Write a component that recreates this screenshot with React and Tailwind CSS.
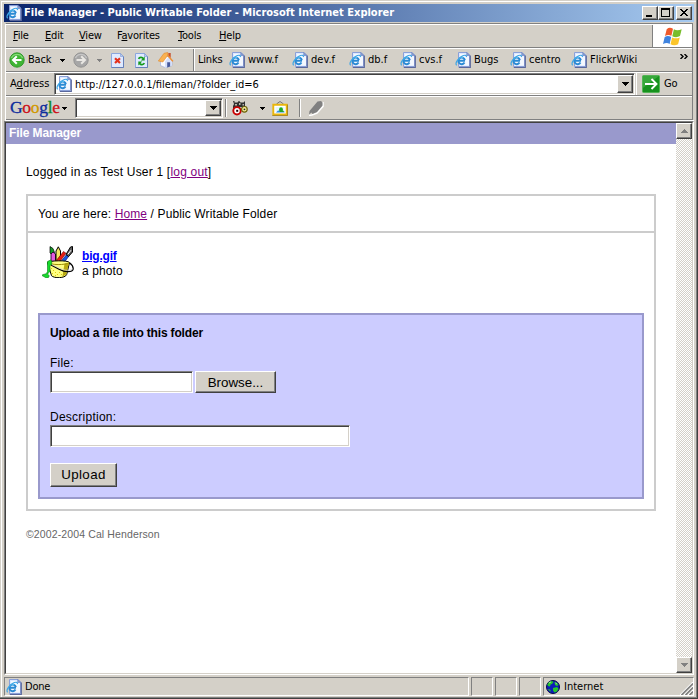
import React from "react";

const UI = "font-['DejaVu_Sans_Condensed','DejaVu_Sans',sans-serif] text-[11px] leading-[14px] whitespace-nowrap";
const TIGHT = "tracking-[-0.2px]";
const RAISED = "bg-[#d4d0c8] border border-t-white border-l-white border-r-[#404040] border-b-[#404040] shadow-[inset_-1px_-1px_0_#808080]";
const SUNKEN = "bg-white border border-t-[#808080] border-l-[#808080] border-r-white border-b-white shadow-[inset_1px_1px_0_#404040,inset_-1px_-1px_0_#d4d0c8]";

function IePage({ className = "" }) {
  return (
    <svg width="16" height="16" viewBox="0 0 16 16" className={`shrink-0 ${className}`}>
      <path d="M3.500 .5h8.500l2.500 2.500v11.500h-11z" fill="#dce8ff" stroke="#8ba0d8" />
      <path d="M5 2h6v2.500h3v9H5z" fill="#f4f8ff" />
      <path d="M15.300 3.500v12h-11.500" fill="none" stroke="#5a689c" strokeWidth="1.200" />
      <path d="M11.800 .5v2.900h2.900z" fill="#8aa4e0" stroke="#6a7fb8" strokeWidth=".7" />
      <path d="M10 8.800H3.400M9.500 10.600A3.300 3.300 0 1 1 9.900 8.300" fill="none" stroke="#2a8ad4" strokeWidth="1.900" />
      <path d="M3.600 7.200a3.400 3.400 0 0 1 4.600-1.700" fill="none" stroke="#5cc0ee" strokeWidth="1.200" />
      <path d="M1.800 13.200C-.4 12.200 2.200 7 6.500 4.400C9.800 2.500 12.200 3.100 11.200 5.100" fill="none" stroke="#3fa6e6" strokeWidth="1.200" />
    </svg>
  );
}

function Caret({ color = "#000", className = "" }) {
  return (
    <svg width="7" height="4" viewBox="0 0 7 4" shapeRendering="crispEdges" className={`shrink-0 ${className}`}>
      <path d="M0 0h7v1H0zM1 1h5v1H1zM2 2h3v1H2zM3 3h1v1H3z" fill={color} />
    </svg>
  );
}

function SmallCaret({ color = "#000", className = "" }) {
  return (
    <svg width="5" height="3" viewBox="0 0 5 3" shapeRendering="crispEdges" className={`shrink-0 ${className}`}>
      <path d="M0 0h5v1H0zM1 1h3v1H1zM2 2h1v1H2z" fill={color} />
    </svg>
  );
}

function RoundArrow({ forward }) {
  return (
    <svg width="16" height="16" viewBox="0 0 16 16" className="shrink-0">
      <circle cx="8" cy="8" r="7.200" fill={forward ? "#a6a6a6" : "#3fb534"} stroke={forward ? "#8f8f8f" : "#2a9425"} strokeWidth=".9" />
      <path d="M2.500 6a6 6 0 0 1 11 0" fill="none" stroke={forward ? "#c6c6c6" : "#88da78"} strokeWidth="1.300" />
      <path d={forward ? "M3.500 8h8M8.200 4.200L12 8l-3.800 3.800" : "M12.500 8h-8M7.800 4.200L4 8l3.800 3.800"} fill="none" stroke={forward ? "#e9e7e3" : "#fff"} strokeWidth="2" />
    </svg>
  );
}

function PageIcon({ kind }) {
  return (
    <svg width="13" height="15" viewBox="0 0 13 15" className="shrink-0">
      <path d="M.5.5h9l3 3v11H.5z" fill="#dfeaff" stroke="#8ba6dc" />
      <path d="M12.500 3.500v11H.5" fill="none" stroke="#6680b8" />
      <path d="M9.500.5v3h3z" fill="#b7cbf2" stroke="#8199cc" strokeWidth=".6" />
      {kind === "stop" ? (
        <path d="M4 5.200l5 4.800M9 5.200l-5 4.800" stroke="#e5301c" strokeWidth="2.200" />
      ) : (
        <g fill="none" stroke="#159a1c" strokeWidth="1.700">
          <path d="M3.600 5.800c.8-1.800 3.600-2 4.800-.2M9.400 10.200c-1 1.800-3.600 2-4.800.3" />
          <path d="M9.700 3.500v4.100H5.800zM3.300 12.500V8.400h3.900z" fill="#159a1c" stroke="none" />
        </g>
      )}
    </svg>
  );
}

function HomeIcon() {
  return (
    <svg width="16" height="16" viewBox="0 0 16 16" className="shrink-0">
      <path d="M10.300 1h2.400v5l-2.400-2z" fill="#c8502c" />
      <path d="M2.500 8.500L9 4l5 5v4.500l-6.500 2.200-5-2.200z" fill="#fbfcff" stroke="#9aa8d8" strokeWidth=".6" />
      <path d="M7 9.500L10.500 5l3.500 4v4.500L7 15.700z" fill="#d6e0fa" />
      <path d="M9.200 10.200h2.900v4.200l-2.900 1z" fill="#47599c" />
      <path d="M.3 9L6 1.300 9.800.5 10 3 4.800 10z" fill="#f9b251" stroke="#e28a2c" strokeWidth=".6" />
      <path d="M9.300 1.800l6.200 7.300-1.200.7-4.800-5.500z" fill="#ed8f32" />
    </svg>
  );
}

function WindowsFlag() {
  return (
    <svg width="19" height="19" viewBox="0 0 19 19">
      <path d="M3.700 2.200C5.800.4 7.800.5 10 1.800L8.400 8.800C6.500 7.600 4.300 7.600 2 8.900z" fill="#ef5a2b" />
      <path d="M10.900 2.300c2.300 1.400 4.800 1.400 7.800-.1L17 9.100c-2.400 1.400-5 1.500-7.700.2z" fill="#78bd2c" />
      <path d="M1.700 9.900c2.100-1.300 4.300-1.300 6.500 0L6.600 16.900C4.800 15.600 2.500 15.600 0 16.900z" fill="#3f83df" />
      <path d="M9.100 10.400c2.500 1.200 5.100 1.200 7.700 0l-1.700 6.900c-2.700 1.400-5.100 1.400-7.600 0z" fill="#fbc52b" />
    </svg>
  );
}

function Binoculars() {
  return (
    <svg width="16" height="16" viewBox="0 0 16 16" className="shrink-0">
      <path d="M1 1h1.500v1.500h3L7 .8l1.500 1.700h3L13 1v5l1 1H8L5 8 1 10V6l1-2z" fill="#303030" />
      <path d="M3 4h2v1.500H3zM7 3h1.500v2H7zM10.500 4h1.500v1.500h-1.500z" fill="#b8b8ac" />
      <circle cx="5" cy="10.800" r="3.700" fill="#fff" stroke="#c80000" strokeWidth="1.900" />
      <circle cx="12.400" cy="9.300" r="2.800" fill="#fff8a0" stroke="#6b6008" strokeWidth="1.200" />
      <path d="M4.200 9.800h2v2h-2z" fill="#200" />
      <path d="M11.600 8.600h1.700v1.600h-1.700z" fill="#222" />
    </svg>
  );
}

function PictureIcon() {
  return (
    <svg width="16" height="15" viewBox="0 0 16 15" className="shrink-0">
      <path d="M4.500 3L8 .5 11.500 3" fill="none" stroke="#686868" strokeWidth=".9" />
      <path d="M1.300 3.800h13.400v9.700H1.300z" fill="#fff" stroke="#e9b60c" strokeWidth="1.900" />
      <path d="M.3 14.600h15.300V3.500" fill="none" stroke="#8e6c00" strokeWidth=".7" />
      <path d="M3.500 6h9v5.500h-9z" fill="#e6f7ff" />
      <path d="M4 11.500l2-2 3 .5 3.500.5v1z" fill="#2f8fe2" />
      <circle cx="9" cy="8.200" r="1.900" fill="#1cae20" />
      <path d="M7 9.300h4l1 1.600H8z" fill="#23a426" />
    </svg>
  );
}

function Globe() {
  return (
    <svg width="14" height="14" viewBox="0 0 14 14" className="shrink-0">
      <circle cx="7" cy="7" r="6.500" fill="#0c1cb8" stroke="#050a45" />
      <path d="M1.300 4.500L3 2l3-1 1.500 1L6 4 4.500 4.500 4 6.500 2 6zM8.500 2l2.500.8L12.500 5 11 6 9 5zM7 8l4-1 1.500 1.500L11 11.500 8.500 12.500 7 10.500zM2 9l2 .5 1 2L3.500 11z" fill="#25c72c" />
      <path d="M3 3l2-1.200M9.500 3l1.300.8" stroke="#c3f5bd" strokeWidth=".8" />
    </svg>
  );
}

function PaintBucket() {
  return (
    <svg width="32" height="32" viewBox="0 0 32 32" className="shrink-0">
      <path d="M8 .5l3 2 1.500 4-2 3L8 7z" fill="#139a28" stroke="#000" strokeWidth=".7" />
      <path d="M9 8l2-2 2.500 2v8H9z" fill="#e45be0" stroke="#202" strokeWidth=".9" />
      <path d="M14 5L16.300.8 18.500 5v10H14z" fill="#f6e860" stroke="#000" strokeWidth="1" />
      <path d="M13.500 15.500L21.500 5.500l2.500 1.800L17.500 16z" fill="#e81c12" stroke="#600" strokeWidth=".6" />
      <path d="M18.500 16L25 8l2.200 1.700L22.500 16z" fill="#1558e0" stroke="#000060" strokeWidth=".6" />
      <path d="M24 8.500L28.500 1l2-.5v5.500L26.500 10.500z" fill="#606060" stroke="#000" strokeWidth="1" />
      <path d="M26 8.200l3-4" stroke="#fff" strokeWidth="1" />
      <path d="M5.500 16.500c2-2 20-2.500 22 0l-2.800 12c-1.500 4-13 4-15.200 1.200z" fill="#ffff80" stroke="#000" strokeWidth="1" />
      <path d="M22.500 17.500l4.500-.5-2.600 11.300-4 2.400z" fill="#b9aa12" />
      <path d="M9 22h1v1H9zM11 24h1v1h-1zM13 26h1v1h-1zM15 28h1v1h-1zM17 26h1v1h-1zM19 28h1v1h-1zM13 29h1v1h-1zM10 27h1v1h-1z" fill="#e0cc10" />
      <path d="M5.500 16.500c3 2.500 18 3 22 0" fill="none" stroke="#9b8c08" strokeWidth="1" />
      <path d="M9 19l8 4.200c6 3.300 13.500 3.400 14.200 0 .2-2.500-1.700-5-3.700-6.500" fill="none" stroke="#000" strokeWidth="1.200" />
      <path d="M10 18.700l8 3.700c5 2.200 10 2.800 12 .8" fill="none" stroke="#d0d0d0" strokeWidth=".8" />
      <path d="M5.500 15.500l3-1.500 1.200 1v3.500l-1.700 1v6l-1.800 1.500-.5 1.200 1.600 1.500-1 2H3.500L2 30.500.5 30v-1.300l3.800-1 1.200-2.200z" fill="#16dc2c" stroke="#087812" strokeWidth=".6" />
    </svg>
  );
}

function Menu({ k, rest, pre = "", width }) {
  return <span className={`${UI} ${TIGHT} ${width} shrink-0`}>{pre}<u className="underline underline-offset-1 decoration-1">{k}</u>{rest}</span>;
}

function LinkItem({ label, width }) {
  return (
    <div className={`flex items-center gap-[3px] shrink-0 ${width}`}>
      <IePage />
      <span className={UI}>{label}</span>
    </div>
  );
}

const LINKS = [
  ["www.f", "w-[63px]"],
  ["dev.f", "w-[57px]"],
  ["db.f", "w-[51px]"],
  ["cvs.f", "w-[55px]"],
  ["Bugs", "w-[55px]"],
  ["centro", "w-[61px]"],
  ["FlickrWiki", "w-[84px]"],
];

const BAND = "border-t border-t-white border-b border-b-[#808080] flex items-center h-6 shrink-0";

export default function App() {
  return (
    <div className="w-[698px] h-[699px] overflow-hidden bg-[#d4d0c8] text-black border-r border-b border-[#404040]">
      <div className="w-[697px] h-[698px] border-r border-b border-[#808080] pt-px pl-px">
        <div className="w-[695px] h-[696px] border-t border-l border-white pt-[2px] pl-[2px] flex flex-col">
          {/* title bar */}
          <div className="w-[690px] h-[18px] shrink-0 bg-linear-to-r/srgb from-[#0a246a] to-[#a6caf0] flex items-center pl-[2px] pr-[2px]">
            <IePage />
            <span className="ml-[2px] font-['DejaVu_Sans_Condensed','DejaVu_Sans',sans-serif] font-bold text-[11px] leading-[14px] whitespace-nowrap text-white">File Manager - Public Writable Folder - Microsoft Internet Explorer</span>
            <div className="ml-auto flex">
              <div className={`w-4 h-[14px] ${RAISED}`}>
                <div className="w-[6px] h-[2px] bg-black ml-[3px] mt-[8px]" />
              </div>
              <div className={`w-4 h-[14px] ${RAISED}`}>
                <div className="w-[9px] h-[9px] border border-t-2 border-black ml-[2px] mt-px" />
              </div>
              <div className={`w-4 h-[14px] ml-[2px] ${RAISED}`}>
                <svg width="8" height="7" viewBox="0 0 8 7" shapeRendering="crispEdges" className="ml-[3px] mt-[2px]">
                  <path d="M0 0h2v1h1v1h2v-1h1v-1h2v1h-1v1h-1v1h-1v1h1v1h1v1h1v1h-2v-1h-1v-1h-2v1h-1v1h-2v-1h1v-1h1v-1h1v-1h-1v-1h-1v-1h-1z" />
                </svg>
              </div>
            </div>
          </div>

          {/* toolbars */}
          <div className="w-[688px] ml-px mt-px border-t border-l border-t-[#808080] border-l-white border-r border-r-[#808080] flex flex-col shrink-0">
            <div className={BAND}>
              <Menu k="F" rest="ile" width="w-[32px] ml-[7px]" />
              <Menu k="E" rest="dit" width="w-[34px]" />
              <Menu k="V" rest="iew" width="w-[38px]" />
              <Menu pre="F" k="a" rest="vorites" width="w-[61px]" />
              <Menu k="T" rest="ools" width="w-[41px]" />
              <Menu k="H" rest="elp" width="w-[40px]" />
              <div className="ml-auto w-[40px] h-[22px] bg-white border-l border-[#808080] flex items-center justify-center">
                <WindowsFlag />
              </div>
            </div>
            <div className={BAND}>
              <div className="w-[188px] h-[22px] border-r border-[#808080] flex items-center pl-[3px] shrink-0">
                <RoundArrow />
                <span className={`${UI} ${TIGHT} ml-[3px] w-[24px]`}>Back</span>
                <SmallCaret className="ml-[8px]" />
                <div className="ml-[8px] flex"><RoundArrow forward /></div>
                <SmallCaret color="#808080" className="ml-[8px] mr-[9px]" />
                <PageIcon kind="stop" />
                <div className="w-[11px]" />
                <PageIcon kind="refresh" />
                <div className="w-[10px]" />
                <HomeIcon />
              </div>
              <div className="w-px h-[22px] bg-white" />
              <span className={`${UI} ${TIGHT} ml-[3px] w-[31px] shrink-0`}>Links</span>
              {LINKS.map(([label, width]) => <LinkItem key={label} label={label} width={width} />)}
              <svg width="8" height="5" viewBox="0 0 8 5" className="ml-auto mr-[4px] mb-[8px]">
                <path d="M.5 0l2.500 2.500L.5 5M4.500 0L7 2.500 4.500 5" fill="none" stroke="#000" strokeWidth="1.400" />
              </svg>
            </div>
            <div className={BAND}>
              <span className={`${UI} ml-[4px] w-[44px] shrink-0`}>A<u>d</u>dress</span>
              <div className={`w-[581px] h-[22px] ${SUNKEN} flex items-center pl-px pr-px shrink-0`}>
                <IePage />
                <span className={`${UI} ml-[3px] pt-px`}>http://127.0.0.1/fileman/?folder_id=6</span>
                <div className={`ml-auto w-4 h-[18px] ${RAISED} flex items-center justify-center`}><Caret /></div>
              </div>
              <div className="w-px h-[22px] bg-white ml-px" />
              <svg width="18" height="18" viewBox="0 0 18 18" className="ml-[5px]">
                <rect x=".5" y=".5" width="17" height="17" rx="1" fill="#17921e" stroke="#54b356" />
                <path d="M1 1h16L1 13z" fill="#4cb74e" opacity=".6" />
                <path d="M3 9h11M9.500 4l5 5-5 5" fill="none" stroke="#fff" strokeWidth="1.900" />
              </svg>
              <span className={`${UI} ${TIGHT} ml-[4px]`}>Go</span>
            </div>
            <div className={BAND}>
              <span className="ml-[4px] w-[49px] shrink-0 pb-[2px] font-['Liberation_Serif',serif] text-[17.500px] leading-[20px] tracking-[-0.3px] [-webkit-text-stroke:0.3px]">
                <span className="text-[#0c2c9c]">G</span>
                <span className="text-[#cc1018]">o</span>
                <span className="text-[#d09800]">o</span>
                <span className="text-[#0c2c9c]">g</span>
                <span className="text-[#108828]">l</span>
                <span className="text-[#cc1018]">e</span>
              </span>
              <SmallCaret className="ml-[3px] mr-[8px]" />
              <div className={`w-[148px] h-[20px] ${SUNKEN} flex items-center justify-end pr-px shrink-0`}>
                <div className={`w-4 h-[16px] ${RAISED} flex items-center justify-center`}><Caret /></div>
              </div>
              <div className="w-[2px] h-[18px] bg-[#808080] border-r border-white ml-[2px] mr-[5px]" />
              <Binoculars />
              <SmallCaret className="ml-[12px] mr-[7px]" />
              <PictureIcon />
              <div className="w-[2px] h-[18px] bg-[#808080] border-r border-white ml-[11px] mr-[7px]" />
              <svg width="16" height="16" viewBox="0 0 16 16">
                <path d="M1 15.500L4 15 9 13 15 6.500V2" fill="none" stroke="#fff" strokeWidth="1.500" />
                <path d="M1 14.500L1.500 11 9.500 1.500 13 1l1.500 1.500V5.500L9 12 4.500 14 3.500 12.500z" fill="#808080" />
              </svg>
            </div>
          </div>
          <div className="h-px ml-px w-[689px] bg-white shrink-0" />

          {/* browser viewport */}
          <div className="w-[690px] h-[554px] shrink-0 border-t border-l border-[#808080] border-r border-b border-r-white border-b-white">
            <div className="w-[688px] h-[552px] border-t border-l border-[#404040] border-r border-r-[#d4d0c8] border-b border-b-[#d4d0c8] flex">
              <div className="w-[670px] bg-white font-['Liberation_Sans',Arial,sans-serif] text-[12px] leading-[15px] flex flex-col shrink-0">
                <div className="h-[21px] shrink-0 bg-[#9999cc] text-white font-bold pl-[3px] leading-[21px] tracking-[-0.1px]">File Manager</div>
                <div className="px-5 pt-[21px]">
                  <p className="h-[15px] tracking-[0.2px]">Logged in as Test User 1 [<a className="text-[#800080] underline">log out</a>]</p>
                  <div className="mt-[14px] w-[630px] h-[317px] border-2 border-[#cccccc]">
                    <div className="h-[37px] border-b-2 border-[#cccccc] px-[10px] pt-[11px] leading-[14px] tracking-[0.12px]">
                      You are here: <a className="text-[#800080] underline">Home</a> / Public Writable Folder
                    </div>
                    <div className="px-[10px] pt-[13px]">
                      <div className="h-[67px] flex pl-[4px]">
                        <PaintBucket />
                        <div className="ml-[8px] pt-[3px]">
                          <a className="font-bold text-[#0000ff] underline tracking-[-0.2px]">big.gif</a>
                          <div className="tracking-[0.1px]">a photo</div>
                        </div>
                      </div>
                      <div className="w-[606px] h-[186px] bg-[#ccccff] border-2 border-[#9999cc] px-[10px] pt-[11px]">
                        <div className="font-bold tracking-[-0.17px]">Upload a file into this folder</div>
                        <div className="mt-[15px] tracking-[0.2px]">File:</div>
                        <div className="flex gap-[2px]">
                          <div className={`w-[143px] h-[22px] ${SUNKEN}`} />
                          <div className={`w-[81px] h-[22px] ${RAISED} text-[13.333px] leading-[21px] text-center`}>Browse...</div>
                        </div>
                        <div className="mt-[17px] tracking-[0.25px]">Description:</div>
                        <div className={`w-[300px] h-[22px] ${SUNKEN}`} />
                        <div className={`mt-[16px] w-[67px] h-[24px] ${RAISED} text-[13.333px] leading-[21px] text-center tracking-[0.4px]`}>Upload</div>
                      </div>
                    </div>
                  </div>
                  <p className="mt-[16px] text-[10.500px] tracking-[0.12px] text-[#666666]">©2002-2004 Cal Henderson</p>
                </div>
              </div>
              {/* scrollbar */}
              <div className="w-4 flex flex-col justify-between bg-[repeating-conic-gradient(#ffffff_0_25%,#d4d0c8_0_50%)] bg-size-[2px_2px]">
                <div className={`w-4 h-4 ${RAISED} flex items-center justify-center`}>
                  <Caret color="#808080" className="rotate-180" />
                </div>
                <div className={`w-4 h-4 ${RAISED} flex items-center justify-center`}>
                  <Caret color="#808080" />
                </div>
              </div>
            </div>
          </div>

          {/* status bar */}
          <div className="mt-[2px] w-[690px] h-[19px] flex gap-[2px] shrink-0">
            <div className="w-[465px] border border-t-[#808080] border-l-[#808080] border-r-white border-b-white flex items-center pl-px">
              <IePage />
              <span className={`${UI} ${TIGHT} ml-[3px]`}>Done</span>
            </div>
            <div className="w-[22px] border border-t-[#808080] border-l-[#808080] border-r-white border-b-white" />
            <div className="w-[22px] border border-t-[#808080] border-l-[#808080] border-r-white border-b-white" />
            <div className="w-[22px] border border-t-[#808080] border-l-[#808080] border-r-white border-b-white" />
            <div className="w-[151px] border border-t-[#808080] border-l-[#808080] border-r-white border-b-white flex items-center pl-[2px]">
              <Globe />
              <span className={`${UI} ml-[4px]`}>Internet</span>
              <svg width="13" height="13" viewBox="0 0 13 13" className="ml-auto self-end">
                <path d="M0 13L13 0M4 13l9-9M8 13l5-5" stroke="#fff" strokeWidth="1.200" />
                <path d="M1.500 13L13 1.500M5.500 13L13 5.500M9.500 13L13 9.500" stroke="#808080" strokeWidth="1.700" />
              </svg>
            </div>
          </div>
        </div>
      </div>
    </div>
  );
}
